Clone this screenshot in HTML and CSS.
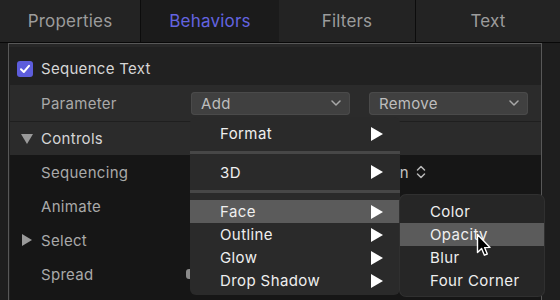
FILE: index.html
```html
<!DOCTYPE html>
<html lang="en">
<head>
  <meta charset="UTF-8">
  <title>Behaviors - Sequence Text</title>
  <link rel="stylesheet" href="styles.css">
</head>
<body>
  <div class="tabs">
    <div class="tab">Properties</div>
    <div class="tab sel">Behaviors</div>
    <div class="tab">Filters</div>
    <div class="tab last">Text</div>
  </div>

  <div class="panel">
    <div class="row head">
      <span class="check">
        <svg width="16" height="16" viewBox="0 0 16 16"><path d="M4 8.3 L6.8 11 L12 4.8" fill="none" stroke="#fff" stroke-width="2" stroke-linecap="round" stroke-linejoin="round"/></svg>
      </span>
      <span class="title">Sequence Text</span>
    </div>

    <div class="row param">
      <span class="label">Parameter</span>
      <div class="popup">Add
        <svg class="chev" width="10" height="6" viewBox="0 0 10 6"><path d="M1 1 L5 5 L9 1" fill="none" stroke="#a8a8a8" stroke-width="1.5" stroke-linecap="round" stroke-linejoin="round"/></svg>
      </div>
      <div class="popup">Remove
        <svg class="chev" width="10" height="6" viewBox="0 0 10 6"><path d="M1 1 L5 5 L9 1" fill="none" stroke="#a8a8a8" stroke-width="1.5" stroke-linecap="round" stroke-linejoin="round"/></svg>
      </div>
    </div>

    <div class="row group">
      <svg class="tri" width="12" height="10" viewBox="0 0 12 10"><path d="M0 0 L12 0 L6 10 Z" fill="#9a9a9a"/></svg>
      <span class="title">Controls</span>
    </div>

    <div class="rows-dark">
      <div class="row item">
        <span class="label">Sequencing</span>
        <span class="value">Position</span>
        <svg class="stepper" width="10" height="16" viewBox="0 0 10 16"><path d="M1.5 6 L5 2.5 L8.5 6 M1.5 10 L5 13.5 L8.5 10" fill="none" stroke="#b8b8b8" stroke-width="1.5" stroke-linecap="round" stroke-linejoin="round"/></svg>
      </div>
      <div class="row item">
        <span class="label">Animate</span>
      </div>
      <div class="row item sel-row">
        <svg class="tri-r" width="10" height="12" viewBox="0 0 10 12"><path d="M0 0 L10 6 L0 12 Z" fill="#9a9a9a"/></svg>
        <span class="label">Select</span>
      </div>
      <div class="row item">
        <span class="label">Spread</span>
        <span class="thumb"></span>
      </div>
      <div class="row item"></div>
    </div>
  </div>

  <div class="menu main">
    <div class="mi">Format <span class="arrow"></span></div>
    <div class="sep"></div>
    <div class="mi">3D <span class="arrow"></span></div>
    <div class="sep"></div>
    <div class="mi hi">Face <span class="arrow"></span></div>
    <div class="mi">Outline <span class="arrow"></span></div>
    <div class="mi">Glow <span class="arrow"></span></div>
    <div class="mi">Drop Shadow <span class="arrow"></span></div>
  </div>

  <div class="menu sub">
    <div class="mi">Color</div>
    <div class="mi hi">Opacity</div>
    <div class="mi">Blur</div>
    <div class="mi">Four Corner</div>
  </div>

  <svg class="cursor" width="16" height="26" viewBox="0 0 16 26">
    <path d="M1.5 1.5 L1.5 19.5 L5.6 15.6 L8.4 22.2 L11.3 21 L8.6 14.6 L14 14.4 Z" fill="#000" stroke="#fff" stroke-width="1.4" stroke-linejoin="round"/>
  </svg>
</body>
</html>
```

FILE: styles.css
```css
body { margin: 0; width: 560px; height: 300px; overflow: hidden; background: #1e1e1e; font-family: Inter, "Noto Sans", sans-serif; position: relative; }

.tabs { display: flex; height: 42px; border-bottom: 1px solid #080808; background: #232323; }
.tab { width: 140px; display: flex; align-items: center; justify-content: center; font-size: 17px; color: #9c9c9c; letter-spacing: 0.2px; }
.tab.sel { width: 138px; background: #1b1b1b; color: #6464e0; border-left: 1px solid #0c0c0c; }
.tab:nth-child(3) { width: 136px; }
.tab.last { flex: 1; border-left: 1px solid #0c0c0c; }

.panel { margin-left: 8px; width: 532px; height: 257px; overflow: hidden; border: 1px solid #585858; border-bottom: none; background: #212121; box-shadow: inset 0 3px 0 #272727; }

.row { display: flex; align-items: center; font-size: 15px; letter-spacing: 0.3px; }
.head { height: 33px; padding-top: 8px; padding-left: 8px; }
.check { width: 16px; height: 16px; border-radius: 3px; background: #5d5ddc; display: flex; flex-shrink: 0; }
.title { color: #d6d6d6; margin-left: 8px; }

.param { height: 36px; background: #2b2b2b; border-bottom: 1px solid #1f1f1f; margin-left: 1px; padding-left: 31px; }
.label { color: #a9a9a9; width: 150px; flex-shrink: 0; }
.popup { width: 159px; height: 23px; flex-shrink: 0; margin-right: 19px; padding: 0 10px; box-sizing: border-box; border-radius: 4px; background: #404040; box-shadow: inset 0 0 0 1px #4a4a4a; color: #bdbdbd; display: flex; align-items: center; justify-content: space-between; }
.chev { margin-right: -1px; }

.group { height: 33px; background: #2b2b2b; margin-left: 1px; }
.tri { margin-left: 11px; flex-shrink: 0; }
.group .title { margin-left: 8px; }

.rows-dark { background: #161616; margin-left: 1px; }
.item { height: 34px; padding-left: 31px; }
.sel-row { padding-left: 12px; }
.tri-r { flex-shrink: 0; margin-right: 9px; }
.value { width: 218px; flex-shrink: 0; text-align: right; color: #c4c4c4; }
.stepper { margin-left: 7px; flex-shrink: 0; }
.thumb { width: 12px; height: 10px; border-radius: 3px; background: #8a8a8a; margin-left: -5px; flex-shrink: 0; }

.menu { position: absolute; background: #2a2a2a; border-radius: 6px; font-size: 15px; letter-spacing: 0.4px; color: #efefef; }
.main { left: 190px; top: 117px; width: 210px; padding: 5px 0 3px; }
.sub { left: 400px; top: 195px; width: 144px; padding: 5px 0 4px; background: #262626; box-shadow: 0 0 0 1px #303030; }
.mi { height: 23px; padding-left: 30px; display: flex; align-items: center; justify-content: space-between; padding-right: 17px; }
.hi { background: #5b5b5b; }
.main .mi:nth-child(3) { height: 24px; }
.sep { height: 3px; background: #474747; margin: 6px 0 6px; }
.main .sep:nth-child(4) { margin: 6px 0 7px; }
.arrow { width: 0; height: 0; border-top: 7px solid transparent; border-bottom: 7px solid transparent; border-left: 12px solid #fff; }

.cursor { position: absolute; left: 476px; top: 233px; }
```
